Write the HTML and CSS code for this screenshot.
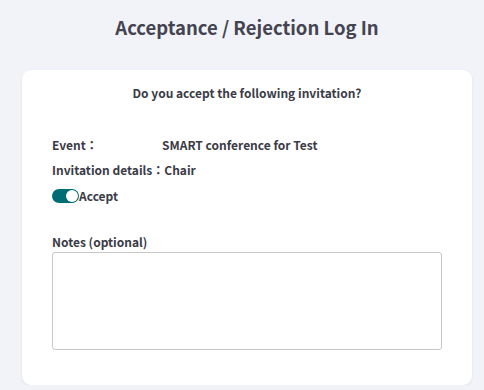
FILE: index.html
```html
<!DOCTYPE html>
<html lang="en">
<head>
    <meta charset="UTF-8">
    <meta name="viewport" content="width=device-width, initial-scale=1.0">
    <title>Acceptance / Rejection Log In</title>
    <link rel="stylesheet" href="styles.css">
</head>
<body>
    <div class="page">
        <h1 class="page-title">Acceptance / Rejection Log In</h1>

        <div class="card">
            <p class="question">Do you accept the following invitation?</p>

            <div class="details">
                <div class="detail-row">
                    <span class="detail-label">Event：</span>
                    <span class="detail-value">SMART conference for Test</span>
                </div>
                <div class="detail-row">
                    <span class="detail-label">Invitation details：</span>
                    <span class="detail-value">Chair</span>
                </div>
            </div>

            <label class="switch">
                <input type="checkbox" class="switch-input" checked>
                <span class="switch-track"><span class="switch-knob"></span></span>
                <span class="switch-text">Accept</span>
            </label>

            <div class="notes">
                <label for="notes" class="notes-label">Notes (optional)</label>
                <textarea id="notes" class="notes-input"></textarea>
            </div>
        </div>
    </div>
</body>
</html>
```

FILE: styles.css
```css
body {
    margin: 0;
    background-color: #f2f3f8;
    font-family: "Noto Sans CJK JP", "Noto Sans", sans-serif;
    color: #3b3b46;
}
.page {
    padding: 0 12px 0 22px;
}
.page-title {
    margin: 0;
    padding: 14px 0 30px;
    font-size: 18.5px;
    font-weight: bold;
    line-height: 26px;
    text-align: center;
    color: #444450;
}
.card {
    background-color: #fff;
    border-radius: 9px;
    box-shadow: 0 1px 3px rgba(0, 0, 0, 0.08);
    padding: 14px 30px 35px;
}
.question {
    margin: 0 0 34px;
    font-size: 12px;
    font-weight: bold;
    line-height: 18px;
    text-align: center;
}
.details {
    display: flex;
    flex-direction: column;
    gap: 7px;
}
.detail-row {
    display: flex;
    font-size: 12px;
    font-weight: bold;
    line-height: 18px;
}
.detail-label {
    flex-shrink: 0;
    min-width: 110px;
    white-space: nowrap;
}
.switch {
    display: flex;
    align-items: center;
    margin-top: 8px;
    font-size: 12px;
    font-weight: bold;
    line-height: 18px;
    cursor: pointer;
}
.switch-input {
    display: none;
}
.switch-track {
    display: flex;
    justify-content: flex-end;
    align-items: center;
    width: 27px;
    height: 14px;
    padding: 0 1px;
    box-sizing: border-box;
    border-radius: 7px;
    background-color: #006c73;
}
.switch-knob {
    width: 12px;
    height: 12px;
    border-radius: 50%;
    background-color: #fff;
}
.notes {
    margin-top: 28px;
}
.notes-label {
    display: block;
    margin-bottom: 1px;
    font-size: 12px;
    font-weight: bold;
    line-height: 18px;
}
.notes-input {
    display: block;
    width: 100%;
    height: 98px;
    box-sizing: border-box;
    margin: 0;
    border: 1px solid #c8c8c8;
    border-radius: 3px;
    resize: none;
}
```
